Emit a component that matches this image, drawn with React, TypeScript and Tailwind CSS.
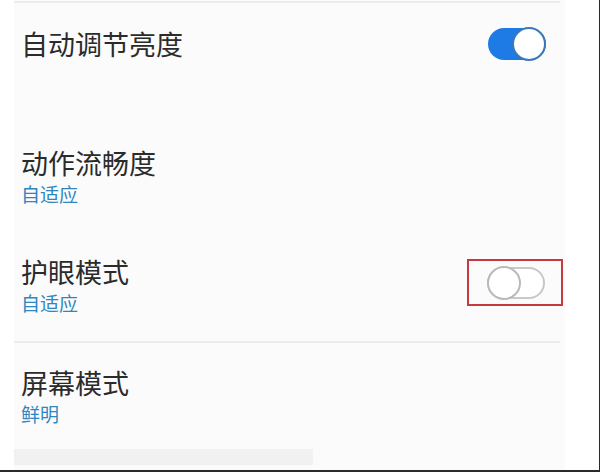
const font = { fontFamily: '"Noto Sans CJK SC", "Noto Sans", sans-serif' };

const ToggleOn = () => (
  <div className="flex h-[32px] w-[58px] items-center justify-end rounded-full bg-[#1e7be6]">
    <div className="h-[34px] w-[34px] rounded-full border-2 border-[#3b78b8] bg-white" />
  </div>
);

const ToggleOff = () => (
  <div className="flex h-[32px] w-[58px] items-center rounded-full border-2 border-[#c8c8c8] bg-white">
    <div className="-ml-[2px] h-[34px] w-[34px] rounded-full border-2 border-[#b9b9b9] bg-white" />
  </div>
);

const SettingText = ({ title, value }: { title: string; value: string }) => (
  <div>
    <div className="text-[27px] leading-[32px] text-[#2b2b2b]">{title}</div>
    <div className="mt-[3px] text-[19px] leading-[24px] text-[#2f86c1]">{value}</div>
  </div>
);

export default function App() {
  return (
    <div
      className="flex h-[472px] w-[600px] border-b-2 border-r border-[#2a2a2a] bg-white"
      style={font}
    >
      <div className="ml-[14px] flex w-[551px] flex-col bg-[#fbfbfb]">
        <div className="mt-[1px] h-[2px] w-[546px] bg-[#ececec]" />

        {/* auto brightness */}
        <div className="flex h-[82px] items-center justify-between pl-[7px] pr-[19px]">
          <div className="text-[27px] leading-[32px] text-[#2b2b2b]">自动调节亮度</div>
          <ToggleOn />
        </div>

        <div className="mt-[62px] pl-[7px]">
          <SettingText title="动作流畅度" value="自适应" />
        </div>

        {/* eye protection */}
        <div className="mt-[50px] flex items-center justify-between pl-[7px] pr-[2px]">
          <SettingText title="护眼模式" value="自适应" />
          <div className="-mt-[6px] flex h-[47px] w-[96px] items-center justify-center border-2 border-[#c63a3d]">
            <div className="ml-[2px]">
              <ToggleOff />
            </div>
          </div>
        </div>

        <div className="mt-[26px] h-[2px] w-[546px] bg-[#ececec]" />

        <div className="mt-[24px] pl-[7px]">
          <SettingText title="屏幕模式" value="鲜明" />
        </div>

        <div className="mt-[23px] h-[16px] w-[299px] bg-[#f1f1f1]" />
      </div>
    </div>
  );
}
